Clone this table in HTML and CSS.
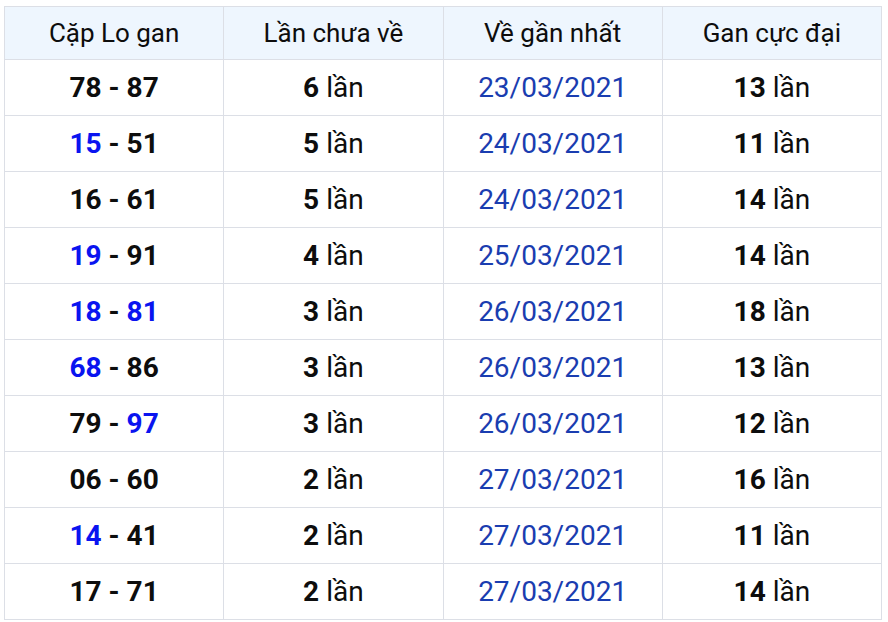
FILE: index.html
```html
<!DOCTYPE html>
<html lang="vi">
<head>
<meta charset="utf-8">
<link rel="stylesheet" href="styles.css">
</head>
<body>
<table class="gan">
  <thead>
    <tr><th>Cặp Lo gan</th><th>Lần chưa về</th><th>Về gần nhất</th><th>Gan cực đại</th></tr>
  </thead>
  <tbody>
    <tr><td class="pair">78 - 87</td><td><b>6</b> lần</td><td class="date">23/03/2021</td><td><b>13</b> lần</td></tr>
    <tr><td class="pair"><span class="hl">15</span> - 51</td><td><b>5</b> lần</td><td class="date">24/03/2021</td><td><b>11</b> lần</td></tr>
    <tr><td class="pair">16 - 61</td><td><b>5</b> lần</td><td class="date">24/03/2021</td><td><b>14</b> lần</td></tr>
    <tr><td class="pair"><span class="hl">19</span> - 91</td><td><b>4</b> lần</td><td class="date">25/03/2021</td><td><b>14</b> lần</td></tr>
    <tr><td class="pair"><span class="hl">18</span> - <span class="hl">81</span></td><td><b>3</b> lần</td><td class="date">26/03/2021</td><td><b>18</b> lần</td></tr>
    <tr><td class="pair"><span class="hl">68</span> - 86</td><td><b>3</b> lần</td><td class="date">26/03/2021</td><td><b>13</b> lần</td></tr>
    <tr><td class="pair">79 - <span class="hl">97</span></td><td><b>3</b> lần</td><td class="date">26/03/2021</td><td><b>12</b> lần</td></tr>
    <tr><td class="pair">06 - 60</td><td><b>2</b> lần</td><td class="date">27/03/2021</td><td><b>16</b> lần</td></tr>
    <tr><td class="pair"><span class="hl">14</span> - 41</td><td><b>2</b> lần</td><td class="date">27/03/2021</td><td><b>11</b> lần</td></tr>
    <tr><td class="pair">17 - 71</td><td><b>2</b> lần</td><td class="date">27/03/2021</td><td><b>14</b> lần</td></tr>
  </tbody>
</table>
</body>
</html>
```
FILE: styles.css
```css
html, body {
  margin: 0;
  padding: 0;
  background: #ffffff;
}
body {
  padding: 6px 6px 0 4px;
  font-family: Roboto, "Liberation Sans", sans-serif;
  color: #111111;
}
.gan {
  width: 878px;
  border-collapse: collapse;
  table-layout: fixed;
}
.gan th, .gan td {
  border: 1px solid #dcdfe6;
  text-align: center;
  padding: 0;
}
.gan th {
  background: #eef6fe;
  height: 52px;
  font-size: 26px;
  font-weight: 400;
  color: #0d0d0d;
}
.gan td {
  height: 55px;
  font-size: 28px;
  font-weight: 400;
  color: #0d0d0d;
}
.gan td b {
  font-weight: 700;
}
.gan td.pair {
  font-weight: 700;
}
.gan .hl {
  color: #0a14f0;
}
.gan td.date {
  color: #1a3db0;
}
```
